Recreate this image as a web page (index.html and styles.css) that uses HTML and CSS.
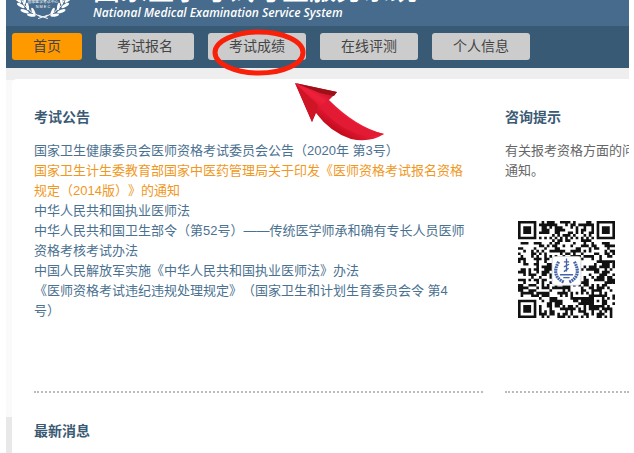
FILE: index.html
```html
<!DOCTYPE html>
<html lang="zh-CN">
<head>
  <meta charset="UTF-8">
  <meta name="viewport" content="width=device-width, initial-scale=1.0">
  <title>国家医学考试考生服务系统</title>
  <link rel="stylesheet" href="styles.css">
</head>
<body>
  <div class="page">
    <header class="site-header">
      <svg class="logo" viewBox="0 0 60 60" aria-hidden="true">
        <g fill="none" stroke="#fff" stroke-width="1">
          <path d="M5 26Q5 48 28 57"/>
          <path d="M55 26Q55 48 32 57"/>
          <path d="M25 58.500L35 55M35 58.500L25 55"/>
        </g>
        <g id="laurel" fill="#fff">
          <ellipse cx="3" cy="33" rx="4" ry="1.500" transform="rotate(50 3 33)"/>
          <ellipse cx="4" cy="39" rx="4.500" ry="1.600" transform="rotate(42 4 39)"/>
          <ellipse cx="7" cy="45" rx="4.500" ry="1.600" transform="rotate(32 7 45)"/>
          <ellipse cx="11" cy="51" rx="4.500" ry="1.600" transform="rotate(20 11 51)"/>
          <ellipse cx="18" cy="55" rx="4.500" ry="1.600" transform="rotate(8 18 55)"/>
          <ellipse cx="9" cy="34" rx="4" ry="1.400" transform="rotate(105 9 34)"/>
          <ellipse cx="11" cy="40" rx="4" ry="1.400" transform="rotate(95 11 40)"/>
          <ellipse cx="14" cy="46" rx="4" ry="1.400" transform="rotate(80 14 46)"/>
          <ellipse cx="20" cy="51" rx="4" ry="1.400" transform="rotate(65 20 51)"/>
        </g>
        <use href="#laurel" transform="translate(60 0) scale(-1 1)"/>
        <text class="logo-text" x="30" y="42">国家医学考试中心</text>
        <text class="logo-text" x="30" y="48">N M E C</text>
      </svg>
      <div class="brand">
        <h1>国家医学考试考生服务系统</h1>
        <p>National Medical Examination Service System</p>
      </div>
    </header>

    <nav class="main-nav">
      <a class="tab active" href="#">首页</a>
      <a class="tab" href="#">考试报名</a>
      <a class="tab" href="#">考试成绩
        <svg class="marker" viewBox="0 0 190 120" aria-hidden="true">
          <defs>
            <linearGradient id="arrow-fill" x1="0" y1="1" x2="1" y2="0">
              <stop offset="0.300" stop-color="#c00a1c"/>
              <stop offset="0.500" stop-color="#f0203c"/>
              <stop offset="0.700" stop-color="#a80818"/>
            </linearGradient>
          </defs>
          <ellipse cx="51" cy="26.500" rx="44" ry="20.500" fill="none" stroke="#f9200a" stroke-width="5"/>
          <path d="M87 57L129 66L121 74Q148 101 176 108Q162 117 143 113Q122 106 108 87L104 96Z" fill="url(#arrow-fill)"/>
          <path d="M87 57L129 66L126 70L112 67Z" fill="#9d1018"/>
          <path d="M87 57L110 79L104 96Z" fill="#cf1425"/>
          <path d="M119 74Q146 102 176 108Q164 112 149 108Q127 100 112 81Z" fill="#e31a33"/>
        </svg>
      </a>
      <a class="tab" href="#">在线评测</a>
      <a class="tab" href="#">个人信息</a>
    </nav>

    <main class="panel">
      <section class="block notices">
        <h2>考试公告</h2>
        <ul>
          <li><a href="#">国家卫生健康委员会医师资格考试委员会公告（2020年 第3号）</a></li>
          <li><a class="hot" href="#">国家卫生计生委教育部国家中医药管理局关于印发《医师资格考试报名资格规定（2014版）》的通知</a></li>
          <li><a href="#">中华人民共和国执业医师法</a></li>
          <li><a href="#">中华人民共和国卫生部令（第52号）——传统医学师承和确有专长人员医师资格考核考试办法</a></li>
          <li><a href="#">中国人民解放军实施《中华人民共和国执业医师法》办法</a></li>
          <li><a href="#">《医师资格考试违纪违规处理规定》（国家卫生和计划生育委员会令 第4号）</a></li>
        </ul>
      </section>

      <section class="block tips">
        <h2>咨询提示</h2>
        <p>有关报考资格方面的问<br>通知。</p>
        <svg class="qr" viewBox="0 0 37 37" role="img" aria-label="二维码">
          <path id="qr-modules" fill="#111"/>
          <rect x="13" y="13.500" width="11" height="11" rx="1" fill="#fff" stroke="#ccd6dc" stroke-width="0.300"/>
          <g fill="none" stroke="#4463a8">
            <path d="M15.500 15.500Q12.500 21 17.500 23.300M21.500 15.500Q24.500 21 19.500 23.300" stroke-width="1.200" stroke-dasharray="0.700 0.250"/>
            <path d="M18.500 14.300V19.300M17.500 15.600H19.500M17.500 17.500L19.500 16.500M17.500 19.300L19.300 18" stroke-width="0.500"/>
            <path d="M16 20.500H21M17.300 21.600H19.700" stroke-width="0.500"/>
          </g>
        </svg>
      </section>

      <section class="news">
        <h2>最新消息</h2>
      </section>
    </main>
  </div>
  <script src="qr.js"></script>
</body>
</html>
```
FILE: styles.css
```css
:root {
  --header-color: #466b8c;
  --nav-color: #385a74;
  --accent-color: #ff9900;
  --link-color: #4b7190;
  --heading-color: #3b5a73;
}

* {
  box-sizing: border-box;
  margin: 0;
  padding: 0;
}

body {
  font-family: "Liberation Sans", "Noto Sans CJK SC", sans-serif;
  font-size: 13px;
  line-height: 20px;
  color: #666;
  background-color: white;
  text-spacing-trim: space-all;
}

a {
  text-decoration: none;
}

.page {
  display: flex;
  flex-direction: column;
  min-height: 100vh;
  margin: 0 5px 0 6px;
  overflow: hidden;
  background: linear-gradient(#eee 80px, #fafafa 80px, #fafafa 417px, #e8e8e8 417px);
}

/* header */
.site-header {
  display: flex;
  align-items: flex-end;
  gap: 21px;
  height: 26px;
  padding: 0 8px;
  overflow: hidden;
  background-color: var(--header-color);
  color: white;
}

.logo {
  flex: none;
  width: 58px;
  height: 58px;
  margin-bottom: 6px;
}

.logo-text {
  fill: white;
  font-size: 4px;
  text-anchor: middle;
}

.brand {
  white-space: nowrap;
}

.brand h1 {
  font-size: 27px;
  line-height: 28px;
  font-weight: 500;
}

.brand p {
  padding-bottom: 5px;
  font-family: "Open Sans", sans-serif;
  font-size: 12px;
  font-style: italic;
  font-weight: 600;
  line-height: 16px;
}

/* navigation */
.main-nav {
  display: flex;
  gap: 14px;
  padding: 7px 6px 8px;
  background-color: var(--nav-color);
}

.tab {
  position: relative;
  padding: 0 21px;
  border-radius: 3px;
  background-color: #ccc;
  color: #444;
  font-size: 14px;
  line-height: 27px;
  white-space: nowrap;
}

.tab.active {
  background-color: var(--accent-color);
}

.marker {
  position: absolute;
  top: -7px;
  left: 0;
  z-index: 1;
  width: 190px;
  height: 120px;
  pointer-events: none;
}

/* content */
.panel {
  display: grid;
  flex: 1;
  grid-template-columns: minmax(0, 449fr) minmax(0, 124fr);
  align-content: start;
  column-gap: 22px;
  margin: 11px 0 0 6px;
  padding: 28px 0 0 22px;
  border-radius: 5px 0 0 0;
  background-color: white;
}

h2 {
  color: var(--heading-color);
  font-size: 14px;
  line-height: 20px;
}

.block {
  padding-bottom: 70px;
  border-bottom: 2px dotted #bbb;
}

.block h2 {
  margin-bottom: 14px;
}

.notices ul {
  padding-right: 12px;
  list-style: none;
}

.notices a {
  color: var(--link-color);
}

.notices .hot {
  color: #f0981e;
}

.tips {
  overflow: hidden;
}

.tips p {
  white-space: nowrap;
}

.qr {
  display: block;
  width: 97px;
  height: 97px;
  margin: 40px 0 0 13px;
}

.news {
  padding-top: 28px;
}
```
FILE: qr.js
```javascript
const SIZE = 37;

// 7x7 corner squares with their quiet zone
function finder(x, y, left, top) {
  const dx = x - left;
  const dy = y - top;
  if (dx < -1 || dx > 7 || dy < -1 || dy > 7) return null;
  const ring = Math.max(Math.abs(dx - 3), Math.abs(dy - 3));
  return ring === 3 || ring < 2;
}

function isDark(x, y, bit) {
  const corners = [[0, 0], [SIZE - 7, 0], [0, SIZE - 7]];
  for (const [left, top] of corners) {
    const value = finder(x, y, left, top);
    if (value !== null) return value;
  }
  // alignment square
  const ring = Math.max(Math.abs(x - 30), Math.abs(y - 30));
  if (ring < 3) return ring !== 1;
  // timing lines
  if (x === 6 || y === 6) return (x + y) % 2 === 0;
  return bit;
}

let seed = 2020;
let d = '';
for (let y = 0; y < SIZE; y++) {
  for (let x = 0; x < SIZE; x++) {
    seed = (seed * 1103515245 + 12345) % 2147483648;
    if (isDark(x, y, seed / 2147483648 > 0.5)) {
      d += `M${x} ${y}h1v1h-1z`;
    }
  }
}
document.getElementById('qr-modules').setAttribute('d', d);
```
